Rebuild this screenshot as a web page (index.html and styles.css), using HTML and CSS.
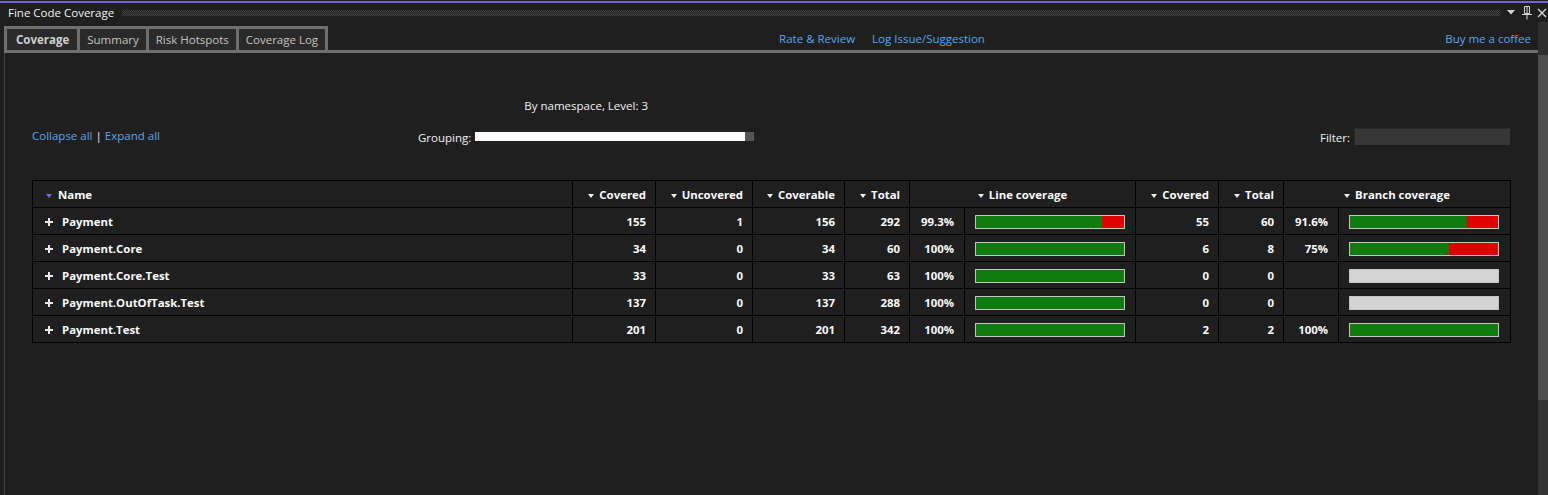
FILE: index.html
```html
<!DOCTYPE html>
<html>
<head>
<meta charset="utf-8">
<link rel="stylesheet" href="styles.css">
</head>
<body>
<div class="accent"></div>
<div class="titlebar">
  <span class="title">Fine Code Coverage</span>
  <span class="grip"></span>
  <span class="tb-icons">
    <svg class="tb-icon" width="8" height="5" viewBox="0 0 8 5"><polygon points="0,0 8,0 4,4.5" fill="#d4d4d4"/></svg>
    <svg class="tb-icon" width="10" height="14" viewBox="0 0 10 14"><path d="M2.5 0.5h5v7h-5z M5 0.5v7" fill="none" stroke="#d4d4d4" stroke-width="1"/><path d="M0 8.5h10 M5 8.5v5" fill="none" stroke="#d4d4d4" stroke-width="1"/></svg>
    <svg class="tb-icon" width="10" height="10" viewBox="0 0 10 10"><path d="M1 1L9 9M9 1L1 9" stroke="#d4d4d4" stroke-width="1.4" fill="none"/></svg>
  </span>
</div>
<div class="body">
  <div class="main">
    <div class="tabstrip">
      <div class="tabs">
        <div class="tab active">Coverage</div>
        <div class="tab">Summary</div>
        <div class="tab">Risk Hotspots</div>
        <div class="tab">Coverage Log</div>
      </div>
      <div class="toplinks"><a class="link">Rate &amp; Review</a><a class="link">Log Issue/Suggestion</a></div>
      <a class="link coffee">Buy me a coffee</a>
    </div>
    <div class="panel">
      <div class="controls">
        <div class="expand"><a class="link">Collapse all</a><span class="sep">|</span><a class="link">Expand all</a></div>
        <div class="grouping">
          <div class="grouping-label">By namespace, Level: 3</div>
          <div class="grouping-row"><span class="lbl">Grouping:</span><div class="slider"><div class="slider-fill"></div></div></div>
        </div>
        <div class="filter"><span class="lbl">Filter:</span><div class="filter-input"></div></div>
      </div>
      <div class="grid">
        <div class="hd name-hd"><span class="sort purple"></span>Name</div>
        <div class="hd num"><span class="sort"></span>Covered</div>
        <div class="hd num"><span class="sort"></span>Uncovered</div>
        <div class="hd num"><span class="sort"></span>Coverable</div>
        <div class="hd num"><span class="sort"></span>Total</div>
        <div class="hd center span2"><span class="sort"></span>Line coverage</div>
        <div class="hd num"><span class="sort"></span>Covered</div>
        <div class="hd num"><span class="sort"></span>Total</div>
        <div class="hd center span2"><span class="sort"></span>Branch coverage</div>

        <div class="c name"><span class="plus"></span>Payment</div>
        <div class="c num">155</div><div class="c num">1</div><div class="c num">156</div><div class="c num">292</div>
        <div class="c num pct">99.3%</div>
        <div class="c barcell"><div class="bar"><div class="fill" style="width:85%"></div></div></div>
        <div class="c num">55</div><div class="c num">60</div>
        <div class="c num pct">91.6%</div>
        <div class="c barcell"><div class="bar"><div class="fill" style="width:79%"></div></div></div>

        <div class="c name"><span class="plus"></span>Payment.Core</div>
        <div class="c num">34</div><div class="c num">0</div><div class="c num">34</div><div class="c num">60</div>
        <div class="c num pct">100%</div>
        <div class="c barcell"><div class="bar"><div class="fill" style="width:100%"></div></div></div>
        <div class="c num">6</div><div class="c num">8</div>
        <div class="c num pct">75%</div>
        <div class="c barcell"><div class="bar"><div class="fill" style="width:67%"></div></div></div>

        <div class="c name"><span class="plus"></span>Payment.Core.Test</div>
        <div class="c num">33</div><div class="c num">0</div><div class="c num">33</div><div class="c num">63</div>
        <div class="c num pct">100%</div>
        <div class="c barcell"><div class="bar"><div class="fill" style="width:100%"></div></div></div>
        <div class="c num">0</div><div class="c num">0</div>
        <div class="c num pct"></div>
        <div class="c barcell"><div class="bar empty"></div></div>

        <div class="c name"><span class="plus"></span>Payment.OutOfTask.Test</div>
        <div class="c num">137</div><div class="c num">0</div><div class="c num">137</div><div class="c num">288</div>
        <div class="c num pct">100%</div>
        <div class="c barcell"><div class="bar"><div class="fill" style="width:100%"></div></div></div>
        <div class="c num">0</div><div class="c num">0</div>
        <div class="c num pct"></div>
        <div class="c barcell"><div class="bar empty"></div></div>

        <div class="c name"><span class="plus"></span>Payment.Test</div>
        <div class="c num">201</div><div class="c num">0</div><div class="c num">201</div><div class="c num">342</div>
        <div class="c num pct">100%</div>
        <div class="c barcell"><div class="bar"><div class="fill" style="width:100%"></div></div></div>
        <div class="c num">2</div><div class="c num">2</div>
        <div class="c num pct">100%</div>
        <div class="c barcell"><div class="bar"><div class="fill" style="width:100%"></div></div></div>
      </div>
    </div>
  </div>
  <div class="scrollbar"><div class="sb-top"></div><div class="sb-thumb"></div></div>
</div>
</body>
</html>
```

FILE: styles.css
```css
* { box-sizing: border-box; }
html, body { margin: 0; padding: 0; }
body {
  width: 1548px;
  height: 495px;
  overflow: hidden;
  background: #1f1f1f;
  color: #f1f1f1;
  font-family: "Open Sans", "Noto Sans", sans-serif;
  font-size: 11.5px;
  display: flex;
  flex-direction: column;
}
.accent {
  margin-top: 1px;
  height: 2px;
  background: #7160e8;
  flex: none;
}
.titlebar {
  height: 19px;
  display: flex;
  align-items: center;
  padding-left: 8px;
  flex: none;
}
.title {
  line-height: 19px;
  color: #f1f1f1;
  white-space: nowrap;
}
.grip {
  flex: 1;
  height: 6px;
  margin: 1px 7px 0 8px;
  background-image: repeating-conic-gradient(#444 0 25%, transparent 0 50%);
  background-size: 2px 2px;
}
.tb-icons {
  display: flex;
  align-items: center;
  width: 41px;
  overflow: hidden;
  flex: none;
}
.tb-icon { display: block; flex: none; }
.tb-icon + .tb-icon { margin-left: 7px; }
.tb-icon:last-child { margin-left: 5px; }
.body {
  flex: 1;
  display: flex;
  min-height: 0;
}
.main {
  flex: 1;
  display: flex;
  flex-direction: column;
  padding-top: 4px;
}
.tabstrip {
  margin-left: 4px;
  height: 27px;
  border-bottom: 3px solid #6f6f6f;
  display: flex;
  align-items: stretch;
  flex: none;
}
.tabs {
  display: flex;
  border-top: 3px solid #6f6f6f;
}
.tab {
  border-left: 3px solid #6f6f6f;
  background: #2a2a2a;
  color: #c4c4c4;
  line-height: 21px;
  padding: 0 7px;
  white-space: nowrap;
}
.tab:last-child { border-right: 3px solid #6f6f6f; }
.tab.active { font-weight: 700; color: #cfcfcf; padding: 0 8px 0 9px; }
.link { color: #5aa6ec; text-decoration: none; white-space: nowrap; }
.toplinks {
  display: flex;
  align-items: center;
  gap: 17px;
  margin-left: 451px;
}
.coffee {
  margin-left: auto;
  margin-right: 7px;
  align-self: center;
}
.panel {
  flex: 1;
  margin-left: 4px;
  border-left: 1px solid #3c3c3c;
  padding: 45px 0 0 27px;
}
.controls {
  display: grid;
  grid-template-columns: 386px auto 1fr;
  align-items: end;
  width: 1478px;
}
.expand { line-height: 16px; display: flex; padding-top: 3px; }
.sep { margin: 0 3px 0 3px; color: #f1f1f1; }
.grouping {
  display: flex;
  flex-direction: column;
  align-items: center;
}
.grouping-label { line-height: 16px; margin-bottom: 14px; }
.grouping-row {
  display: flex;
  align-items: center;
  height: 16px;
}
.lbl { line-height: 16px; margin-right: 4px; padding-top: 3px; }
.slider {
  width: 279px;
  height: 9px;
  background: #555;
  margin-top: 1px;
}
.slider-fill { width: 270px; height: 100%; background: #fafafa; }
.filter {
  display: flex;
  justify-content: flex-end;
  align-items: center;
  height: 16px;
}
.filter-input {
  width: 156px;
  height: 17px;
  margin-top: 1px;
  background: #373737;
  border-top: 1px solid #2a2a2a;
  border-left: 1px solid #2a2a2a;
}
.grid {
  margin-top: 36px;
  width: 1479px;
  display: grid;
  grid-template-columns: 539px 82px 96px 91px 64px 54px 170px 82px 64px 54px 171px;
  grid-auto-rows: 26px;
  gap: 1px;
  padding: 1px;
  background: #000;
  font-weight: 700;
  font-size: 11.4px;
}
.hd, .c {
  background: #1f1f1f;
  display: flex;
  align-items: center;
  white-space: nowrap;
  color: #fbfbfb;
}
.span2 { grid-column: span 2; }
.num { justify-content: flex-end; padding-right: 9px; }
.pct { padding-right: 10px; }
.center { justify-content: center; }
.name-hd { padding-left: 13px; }
.sort {
  display: inline-block;
  width: 0; height: 0;
  border-left: 3.5px solid transparent;
  border-right: 3.5px solid transparent;
  border-top: 4px solid #f0f0f0;
  margin: 3px 5px 0 0;
}
.sort.purple { border-top-color: #7a6ae6; margin-right: 6px; }
.name { padding-left: 12px; }
.plus {
  width: 8px; height: 8px;
  margin: 2px 9px 0 0;
  flex: none;
  background:
    linear-gradient(#e8e8e8, #e8e8e8) center / 8px 2px no-repeat,
    linear-gradient(#e8e8e8, #e8e8e8) center / 2px 8px no-repeat;
}
.barcell { padding-left: 10px; }
.bar {
  width: 150px;
  height: 14px;
  margin-top: 2px;
  border: 1px solid #c4c4c4;
  background: #e00000;
}
.bar.empty { background: #d4d4d4; }
.fill { height: 100%; background: #107c10; }
.scrollbar {
  width: 10px;
  flex: none;
  display: flex;
  flex-direction: column;
  background: #333;
}
.sb-top { height: 33px; background: #2e2e2e; }
.sb-thumb { height: 345px; background: #4d4d4d; }
```
